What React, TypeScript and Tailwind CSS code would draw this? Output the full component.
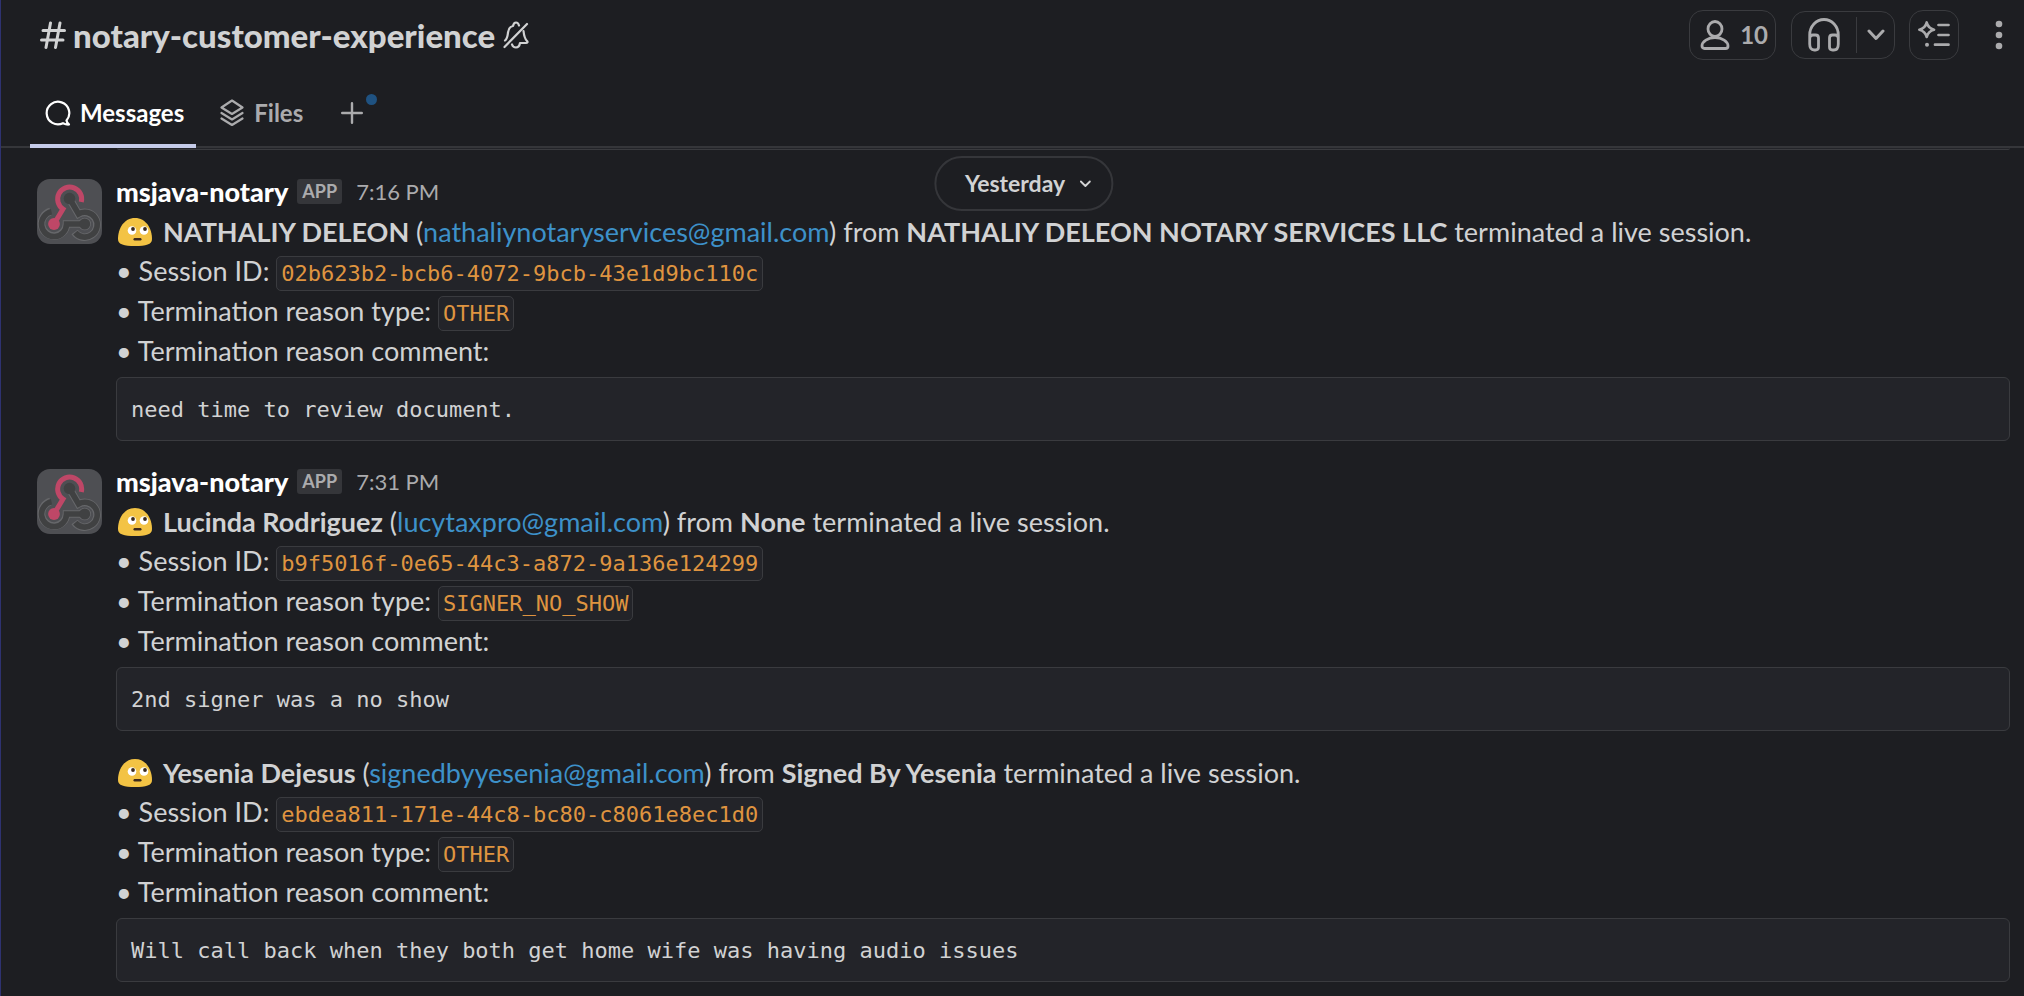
import { ReactNode } from 'react';

interface Report {
  id: string;
  time?: string;
  name: string;
  email: string;
  company: string;
  type: string;
  comment: string;
}

const reports: Report[] = [
  {
    id: '02b623b2-bcb6-4072-9bcb-43e1d9bc110c',
    time: '7:16 PM',
    name: 'NATHALIY DELEON',
    email: 'nathaliynotaryservices@gmail.com',
    company: 'NATHALIY DELEON NOTARY SERVICES LLC',
    type: 'OTHER',
    comment: 'need time to review document.',
  },
  {
    id: 'b9f5016f-0e65-44c3-a872-9a136e124299',
    time: '7:31 PM',
    name: 'Lucinda Rodriguez',
    email: 'lucytaxpro@gmail.com',
    company: 'None',
    type: 'SIGNER_NO_SHOW',
    comment: '2nd signer was a no show',
  },
  {
    id: 'ebdea811-171e-44c8-bc80-c8061e8ec1d0',
    name: 'Yesenia Dejesus',
    email: 'signedbyyesenia@gmail.com',
    company: 'Signed By Yesenia',
    type: 'OTHER',
    comment: 'Will call back when they both get home wife was having audio issues',
  },
];

interface IconProps {
  box: string;
  className: string;
  children: ReactNode;
}

function Icon({ box, className, children }: IconProps) {
  return (
    <svg viewBox={box} className={className} fill="none" stroke="currentColor" strokeWidth="2.200" strokeLinecap="round" strokeLinejoin="round" aria-hidden="true">
      {children}
    </svg>
  );
}

function Avatar() {
  return (
    <svg viewBox="0 0 65 65" className="size-[65px]" fill="none" aria-hidden="true">
      <rect width="65" height="65" rx="13" fill="#4e4f53" />
      <g stroke="#66676a" strokeWidth="7.6">
        <path d="M32.500 19.500l9 15.500A12.400 12.400 0 1 1 37.500 53" />
        <path d="M47.700 45H29.500A12.500 12.500 0 1 1 13.500 32.500" />
      </g>
      <circle cx="47.700" cy="45" r="6.300" fill="#66676a" />
      <g stroke="#404142" strokeWidth="5.600">
        <path d="M32.500 19.500l9 15.500A12.400 12.400 0 1 1 38.300 53.600" />
        <path d="M47.700 45H29.500A12.500 12.500 0 1 1 14.500 32.800" />
      </g>
      <path d="M44.300 23a12 12 0 1 0-18.300 7L17 45" stroke="#bf4767" strokeWidth="5" />
      <circle cx="32.500" cy="19.500" r="5.800" fill="#404142" />
      <circle cx="47.700" cy="45" r="5.500" fill="#404142" />
      <circle cx="17" cy="45" r="5.900" fill="#bf4767" />
    </svg>
  );
}

function RollingEyes() {
  return (
    <svg viewBox="0 0 34 28" className="mr-[11px] ml-[2px] inline-block h-7 w-[34px] align-[-4px]" role="img" aria-label="face with rolling eyes">
      <path d="M17 0C28 0 34 10.500 34 21c0 5.500-6 7-17 7S0 26.500 0 21C0 10.500 6 0 17 0z" fill="#f3c344" />
      <circle cx="14" cy="12.500" r="4.300" fill="#fff" />
      <circle cx="26" cy="12.500" r="4.300" fill="#fff" />
      <circle cx="15" cy="11" r="1.900" fill="#3b2a1c" />
      <circle cx="27" cy="11" r="1.900" fill="#3b2a1c" />
      <rect x="15.500" y="20" width="8" height="2.400" rx="1.200" fill="#3b2a1c" />
    </svg>
  );
}

function Code({ children }: { children: ReactNode }) {
  return (
    <code className="rounded-[5px] border border-[#3a3b3f] bg-[#232429] px-1 py-1 font-['DejaVu_Sans_Mono',monospace] text-[22px] leading-none text-[#df9440]">
      {children}
    </code>
  );
}

function Message({ report }: { report: Report }) {
  return (
    <article className={report.time ? 'mb-7 flex gap-[14px]' : '-mt-[6px] flex gap-[14px]'}>
      <div className="w-[65px] shrink-0">{report.time && <Avatar />}</div>
      <div className="min-w-0 grow">
        {report.time && (
          <header className="mb-2 flex h-[25px] items-center">
            <button className="leading-[27px] font-black text-white">msjava-notary</button>
            <span className="ml-[9px] rounded-[3px] bg-[#35363a] px-[5px] text-[18px] leading-[25px] font-bold text-[#ababad]">APP</span>
            <a href="#" className="ml-[14px] text-[22px] leading-[25px] text-[#ababad]">{report.time}</a>
          </header>
        )}
        <p className="leading-[39px]">
          <RollingEyes />
          <b>{report.name}</b> (<a href="#" className="text-[#3d91c9]">{report.email}</a>) from <b>{report.company}</b> terminated a live session.
        </p>
        <p className="leading-[40px]">• Session ID: <Code>{report.id}</Code></p>
        <p className="leading-[40px]">• Termination reason type: <Code>{report.type}</Code></p>
        <p className="leading-[39px]">• Termination reason comment:</p>
        <pre className="mt-[7px] rounded-md border border-[#3a3b3f] bg-[#232429] px-[14px] pt-[17px] pb-[15px] font-['DejaVu_Sans_Mono',monospace] text-[22px] leading-[30px]">
          {report.comment}
        </pre>
      </div>
    </article>
  );
}

export default function App() {
  return (
    <div className="min-h-screen border-l border-[#2e3270] bg-[#1d1e22] font-[Lato,sans-serif] text-[27px] text-[#d1d2d3]">
      <header className="flex h-[70px] items-center justify-between pr-4 pl-[39px]">
        <div className="flex items-center gap-2">
          <h1 className="flex items-center gap-[7px] text-[33px] leading-10 font-black">
            <Icon box="0 0 26 28" className="h-7 w-[26px]">
              <path d="M3 9.500h21.500M1.500 19h21.500M10.500 2L6 26.500M20 2L15.500 26.500" strokeWidth="3" />
            </Icon>
            notary-customer-experience
          </h1>
          <button aria-label="Notifications muted">
            <Icon box="0 0 26 28" className="h-7 w-[26px]">
              <path d="M1.500 26L24 3" />
              <path d="M2 19.500c2.500-2 2.500-4 3-8 .5-4 2.500-6 5-6.500.5-2.500 1.500-3.500 3-3.500s2.500 1 3 3" />
              <path d="M20.500 10c.5 5 1 7.500 3.500 10 1 1 .5 2-1 2h-6c-.5 3-2 4.500-4 4.500s-3.500-1.500-4-3" />
            </Icon>
          </button>
        </div>
        <div className="flex items-center text-[#ababad]">
          <button className="flex h-[50px] items-center gap-[10px] rounded-[14px] border border-[#3a3b3f] pr-[7px] pl-[10px] text-2xl font-bold">
            <Icon box="0 0 30 30" className="size-[30px]">
              <ellipse cx="15" cy="9" rx="7" ry="7.500" strokeWidth="2.800" />
              <path d="M15 17.500c7 0 13 4 13 8.500 0 1.500-1 2.500-2.500 2.500h-21C3 28.500 2 27.500 2 26c0-4.500 6-8.500 13-8.500z" strokeWidth="2.800" />
            </Icon>
            10
          </button>
          <div className="ml-[15px] flex h-12 items-center rounded-[14px] border border-[#3a3b3f]">
            <button className="pr-4 pl-4" aria-label="Start huddle">
              <Icon box="0 0 32 34" className="h-[34px] w-8">
                <path d="M1.700 26V17a14.300 15.500 0 0 1 28.600 0v9c0 4-1.500 6-4.500 6h-1.300c-2 0-3-1-3-3v-9c0-2 1-3 3-3H27c2 0 3.300 1.500 3.300 3.500M1.700 20.500c0-2 1.300-3.500 3.300-3.500h2.500c2 0 3 1 3 3v9c0 2-1 3-3 3H6.200c-3 0-4.500-2-4.500-6" strokeWidth="2.800" />
              </Icon>
            </button>
            <button className="flex h-9 items-center border-l border-[#3a3b3f] pr-[9px] pl-[10px]" aria-label="Huddle options">
              <Icon box="0 0 18 12" className="h-3 w-[18px]">
                <path d="M2 2l7 7.500L16 2" strokeWidth="3" />
              </Icon>
            </button>
          </div>
          <button className="ml-[14px] flex size-[50px] items-center justify-center rounded-[14px] border border-[#3a3b3f]" aria-label="Summarize">
            <Icon box="0 0 32 28" className="h-7 w-8">
              <path d="M8.700 1.500C9.700 5.500 12 7.700 16 8.700c-4 1-6.300 3.200-7.300 7.300-1-4.100-3.300-6.300-7.300-7.300 4-1 6.300-3.200 7.300-7.200zM20.500 4h10M20.500 14h10M17 23.700h13.500" strokeWidth="2.700" />
              <circle cx="9" cy="23.700" r="2" fill="currentColor" stroke="none" />
            </Icon>
          </button>
          <button className="ml-[31px]" aria-label="More actions">
            <Icon box="0 0 18 30" className="h-[30px] w-[18px]">
              <g fill="currentColor" stroke="none">
                <circle cx="9" cy="4" r="3.300" />
                <circle cx="9" cy="15" r="3.300" />
                <circle cx="9" cy="26" r="3.300" />
              </g>
            </Icon>
          </button>
        </div>
      </header>

      <nav className="flex h-[78px] border-b-2 border-[#35363a] pl-[29px] text-2xl font-bold text-[#ababad]">
        <button className="-mb-[2px] flex items-center gap-[9px] border-b-4 border-[#c5cbe9] pt-3 pr-3 pl-[15px] text-white">
          <Icon box="0 0 26 26" className="size-[26px]">
            <path d="M21.500 20.500A11.300 11.300 0 1 0 18 23.200c2 1 4 1.500 6 1.300-1.500-1-2.300-2.500-2.500-4z" />
          </Icon>
          Messages
        </button>
        <button className="-mb-[2px] flex items-center gap-[10px] border-b-4 border-transparent pt-3 pr-[14px] pl-6">
          <Icon box="0 0 24 28" className="h-7 w-6">
            <path d="M12 1.500l10.500 7L12 15 1.500 8.500zM1.500 14L12 20.500 22.500 14M1.500 19.500L12 26l10.500-6.500" />
          </Icon>
          Files
        </button>
        <button className="relative -mb-[2px] flex items-center border-b-4 border-transparent pt-3 pr-2 pl-6" aria-label="Add a tab">
          <Icon box="0 0 22 22" className="size-[22px]">
            <path d="M11 1.200v19.600M1.200 11h19.600" strokeWidth="2.400" />
          </Icon>
          <span className="absolute top-6 right-[-6px] size-[11px] rounded-full bg-[#1f5281]" />
        </button>
      </nav>

      <main className="pr-[14px] pl-9">
        <div className="relative h-[31px]">
          {/* bottom edge of the code block scrolled under the tabs */}
          <div className="ml-[80px] h-[2px] rounded-b-md border-b border-[#3a3b3f] bg-[#232429]" />
          <button className="absolute top-2 left-1/2 flex h-[55px] -translate-x-1/2 items-center gap-[14px] rounded-full border-2 border-[#35363a] bg-[#1d1e22] pr-5 pl-[29px] text-[23px] font-bold">
            Yesterday
            <Icon box="0 0 12 8" className="h-2 w-3">
              <path d="M1.500 1.500L6 6l4.500-4.500" strokeWidth="1.800" />
            </Icon>
          </button>
        </div>
        {reports.map(report => (
          <Message key={report.id} report={report} />
        ))}
      </main>
    </div>
  );
}
